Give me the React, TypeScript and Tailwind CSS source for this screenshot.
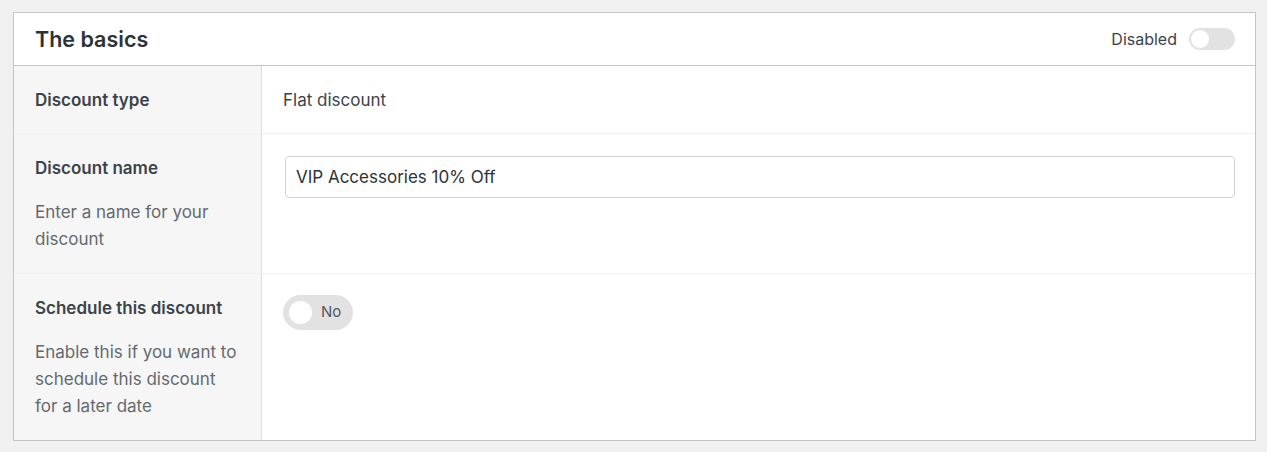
export default function App() {
  return (
    <div className="min-h-[452px] bg-[#f0f0f1] pt-[12px] pl-[13px] pr-[11px] pb-[11px] font-['Inter',sans-serif] text-[#3c434a]">
      <div className="border border-[#c3c4c7] bg-white">
        {/* Header */}
        <div className="flex h-[53px] items-center justify-between border-b border-[#c3c4c7] pl-[21px] pr-[20px]">
          <h2 className="text-[21.5px] font-semibold text-[#2c3338]">The basics</h2>
          <div className="flex items-center gap-[12px]">
            <span className="text-[16px] text-[#3c434a]">Disabled</span>
            <div className="flex h-[22px] w-[46px] items-center rounded-full bg-[#e2e2e2] px-[2px]">
              <div className="h-[18px] w-[18px] rounded-full bg-white" />
            </div>
          </div>
        </div>

        {/* Discount type */}
        <div className="flex border-b border-[#f0f0f1]">
          <div className="w-[248px] shrink-0 border-r border-[#dcdcde] bg-[#f6f6f6] px-[21px] pt-[21px] pb-[19px]">
            <div className="text-[17px] font-semibold leading-[27px]">Discount type</div>
          </div>
          <div className="flex-1 pl-[21px] pr-[20px] pt-[21px] pb-[19px] text-[17px] leading-[27px]">Flat discount</div>
        </div>

        {/* Discount name */}
        <div className="flex border-b border-[#f0f0f1]">
          <div className="w-[248px] shrink-0 border-r border-[#dcdcde] bg-[#f6f6f6] px-[21px] pt-[21px] pb-[20px]">
            <div className="text-[17px] font-semibold leading-[27px]">Discount name</div>
            <p className="mt-[17px] text-[17px] leading-[27px] text-[#646970]">Enter a name for your discount</p>
          </div>
          <div className="flex-1 pl-[23px] pr-[20px] pt-[22px]">
            <input
              readOnly
              value="VIP Accessories 10% Off"
              className="h-[42px] w-full rounded-[4px] border border-[#cfd3dc] px-[10px] text-[17px] text-[#2c3338] outline-none"
            />
          </div>
        </div>

        {/* Schedule */}
        <div className="flex">
          <div className="w-[248px] shrink-0 border-r border-[#dcdcde] bg-[#f6f6f6] px-[21px] pt-[21px] pb-[20px]">
            <div className="text-[17px] font-semibold leading-[27px]">Schedule this discount</div>
            <p className="mt-[17px] text-[17px] leading-[27px] text-[#646970]">
              Enable this if you want to schedule this discount for a later date
            </p>
          </div>
          <div className="flex-1 pl-[21px] pr-[20px] pt-[21px]">
            <div className="flex h-[35px] w-[70px] items-center gap-[9px] rounded-full bg-[#e2e2e2] pl-[6px]">
              <div className="h-[23px] w-[23px] rounded-full bg-white" />
              <span className="text-[15px] text-[#50575e]">No</span>
            </div>
          </div>
        </div>
      </div>
    </div>
  )
}
